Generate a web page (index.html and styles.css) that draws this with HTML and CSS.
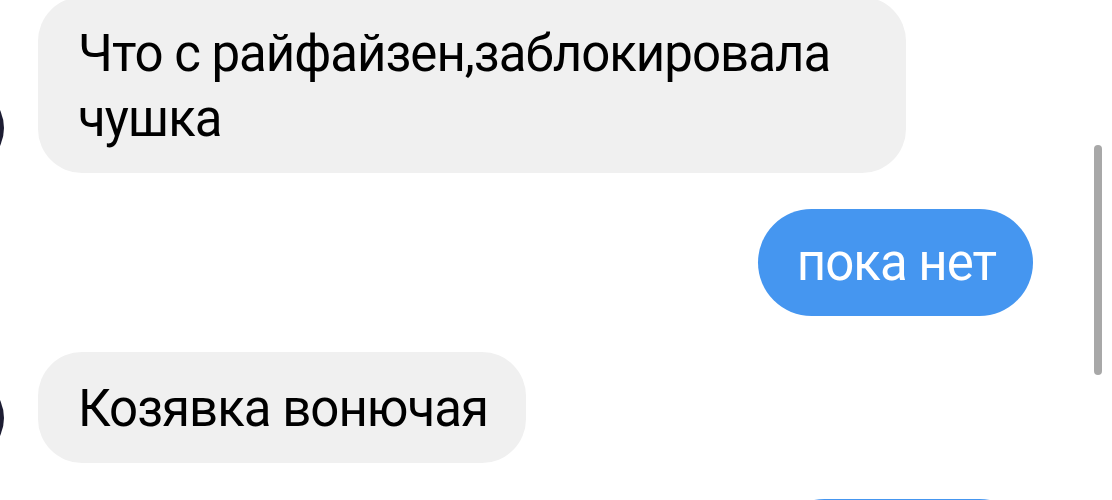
FILE: index.html
```html
<!DOCTYPE html>
<html lang="ru">
<head>
  <meta charset="UTF-8" />
  <title>Чат</title>
  <link rel="stylesheet" href="styles.css">
</head>
<body>
  <div id="chat">
    <div class="row incoming">
      <div class="avatar"></div>
      <div class="bubble">Что с райфайзен,заблокировала чушка</div>
    </div>
    <div class="row outgoing">
      <div class="bubble">пока нет</div>
    </div>
    <div class="row incoming">
      <div class="avatar"></div>
      <div class="bubble">Козявка вонючая</div>
    </div>
    <div class="row outgoing">
      <div class="bubble">ага, жду</div>
    </div>
  </div>
  <div class="scrollbar"></div>
</body>
</html>
```

FILE: styles.css
```css
html, body {
  margin: 0;
  padding: 0;
  height: 100%;
  width: 100%;
  background-color: #ffffff;
  color: #000000;
  font-family: 'Roboto', 'Inter', 'Noto Sans', sans-serif;
  overflow: hidden;
}

#chat {
  display: flex;
  flex-direction: column;
  gap: 36px;
  margin-top: -3px;
  padding-right: 79px;
}

.row {
  display: flex;
  align-items: flex-end;
}

.outgoing {
  justify-content: flex-end;
}

.avatar {
  flex: none;
  width: 84px;
  height: 84px;
  margin-left: -80px;
  margin-right: 34px;
  margin-bottom: 3px;
  border-radius: 50%;
  background-color: #1d1d33;
}

.bubble {
  box-sizing: border-box;
  max-width: 868px;
  padding: 24px 38px 22px 40px;
  font-size: 51px;
  letter-spacing: -1px;
  line-height: 65px;
  border-radius: 44px;
  background-color: #f0f0f0;
}

.outgoing .bubble {
  padding: 21px 37px 21px 39px;
  border-radius: 54px;
  background-color: #4596f0;
  color: #ffffff;
}

.scrollbar {
  position: absolute;
  top: 145px;
  left: 1094px;
  width: 8px;
  height: 230px;
  border-radius: 4px;
  background-color: #a8a8a8;
}
```
